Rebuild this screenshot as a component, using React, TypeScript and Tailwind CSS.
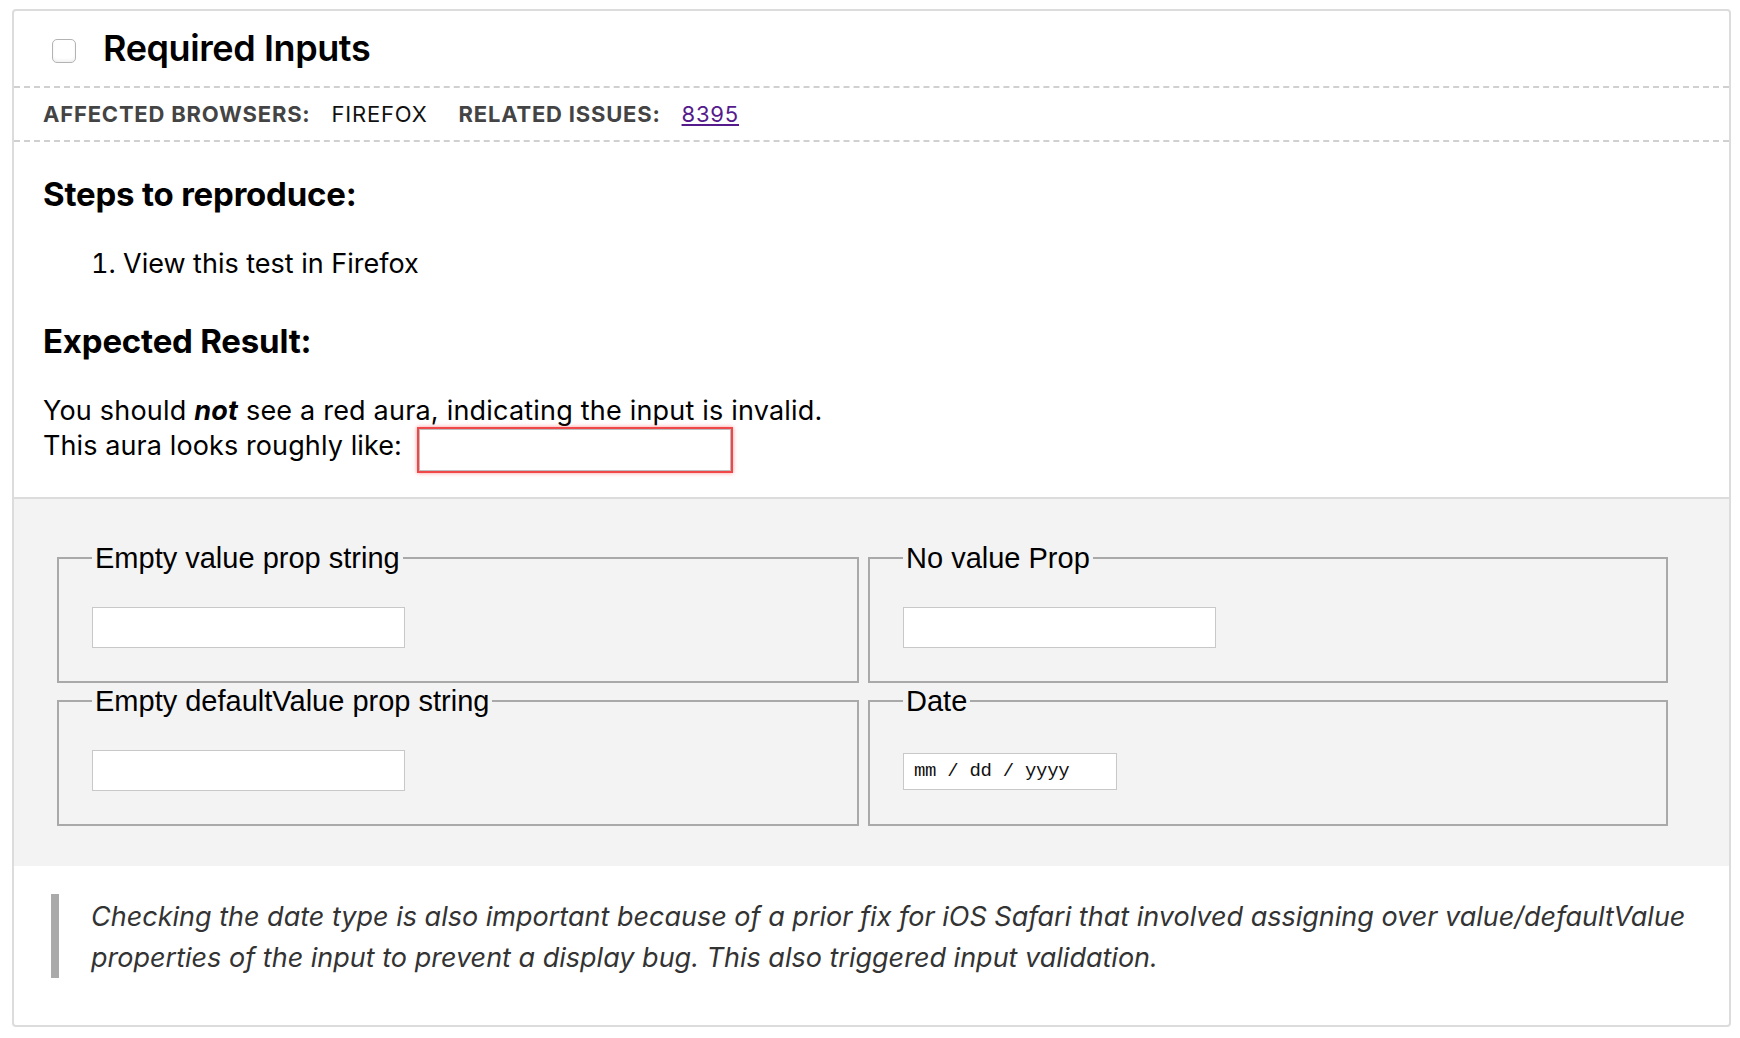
import React from 'react';

const sans = "font-['Inter','Noto_Sans',sans-serif]";
const legendFont = "font-['Liberation_Sans','Arial',sans-serif]";

interface FieldProps {
  legend: string;
  type?: 'text' | 'date';
}

const Field: React.FC<FieldProps> = ({ legend, type = 'text' }) => (
  <fieldset className="border-2 border-[#a9a9a9] pl-[33px] pb-[33px] min-w-0">
    <legend className={`${legendFont} px-[3px] text-[29px] leading-[32px] text-black`}>{legend}</legend>
    {type === 'date' ? (
      <div className="mt-[36px] w-[214px] h-[37px] bg-white border border-[#c8c8c8] flex items-center pl-[10px] font-['Liberation_Mono','DejaVu_Sans_Mono',monospace] text-[19px] text-[#111] tracking-[-0.3px]">
        mm / dd / yyyy
      </div>
    ) : (
      <input
        type="text"
        className="mt-[33px] block w-[313px] h-[41px] bg-white border border-[#c8c8c8] outline-none"
      />
    )}
  </fieldset>
);

export default function App() {
  return (
    <div className={`${sans} bg-white min-h-[1038px] pt-[9px] pl-[12px] pr-[9px]`}>
      <div className="border-2 border-[#dcdcdc] rounded-[4px] overflow-hidden">
        {/* Header */}
        <div className="h-[77px] flex items-center pl-[38px] pt-[4px] border-b-2 border-dashed border-[#d0d0d0]">
          <input
            type="checkbox"
            className="appearance-none w-[24px] h-[24px] rounded-[5px] border border-[#b3b3b3] bg-white shadow-[inset_0_-2px_3px_rgba(0,0,0,0.06)]"
          />
          <h1 className="ml-[27px] -mt-[6px] text-[36px] font-semibold text-black tracking-[-0.4px] leading-none">Required Inputs</h1>
        </div>

        {/* Meta */}
        <div className="h-[54px] flex items-center pl-[29px] border-b-2 border-dashed border-[#d0d0d0] text-[22px] uppercase tracking-[0.8px]">
          <span className="font-bold text-[#444]">Affected Browsers:</span>
          <span className="ml-[21px] text-[#111]">Firefox</span>
          <span className="ml-[31px] font-bold text-[#444]">Related Issues:</span>
          <a href="#8395" className="ml-[21px] text-[#551a8b] underline">8395</a>
        </div>

        {/* Body */}
        <div className="pl-[29px] pt-[33px] pb-[26px] border-b-2 border-[#dcdcdc] text-black">
          <h2 className="text-[33px] font-bold leading-[38px] tracking-[-0.2px]">Steps to reproduce:</h2>
          <ol className="list-decimal pl-[80px] mt-[33px] text-[27px] leading-[36px]">
            <li>View this test in Firefox</li>
          </ol>
          <h2 className="mt-[40px] text-[33px] font-bold leading-[38px] tracking-[-0.2px]">Expected Result:</h2>
          <p className="mt-[33px] text-[27px] leading-[35px] tracking-[0.2px]">
            You should <strong className="italic font-bold">not</strong> see a red aura, indicating the input is invalid.
          </p>
          <div className="flex items-start text-[27px] leading-[35px] tracking-[0.1px]">
            <span>This aura looks roughly like:</span>
            <input
              type="text"
              className="ml-[17px] mt-[1px] w-[312px] h-[42px] bg-white border border-[#bdbdbd] outline-2 outline-[#f04848] shadow-[0_0_4px_2px_rgba(255,60,60,0.55)]"
            />
          </div>
        </div>

        {/* Fields */}
        <div className="bg-[#f3f3f3] pt-[43px] pb-[40px] pl-[43px]">
          <div className="grid grid-cols-[802px_800px] gap-x-[9px] gap-y-[2px]">
            <Field legend="Empty value prop string" />
            <Field legend="No value Prop" />
            <Field legend="Empty defaultValue prop string" />
            <Field legend="Date" type="date" />
          </div>
        </div>

        {/* Note */}
        <div className="pt-[28px] pb-[47px] pl-[37px] pr-[20px]">
          <blockquote className="border-l-[8px] border-[#aaaaaa] pl-[32px] pt-[2px] italic text-[27px] leading-[41px] text-[#333]">
            Checking the date type is also important because of a prior fix for iOS Safari that involved assigning over value/defaultValue properties of the input to prevent a display bug. This also triggered input validation.
          </blockquote>
        </div>
      </div>
    </div>
  );
}
